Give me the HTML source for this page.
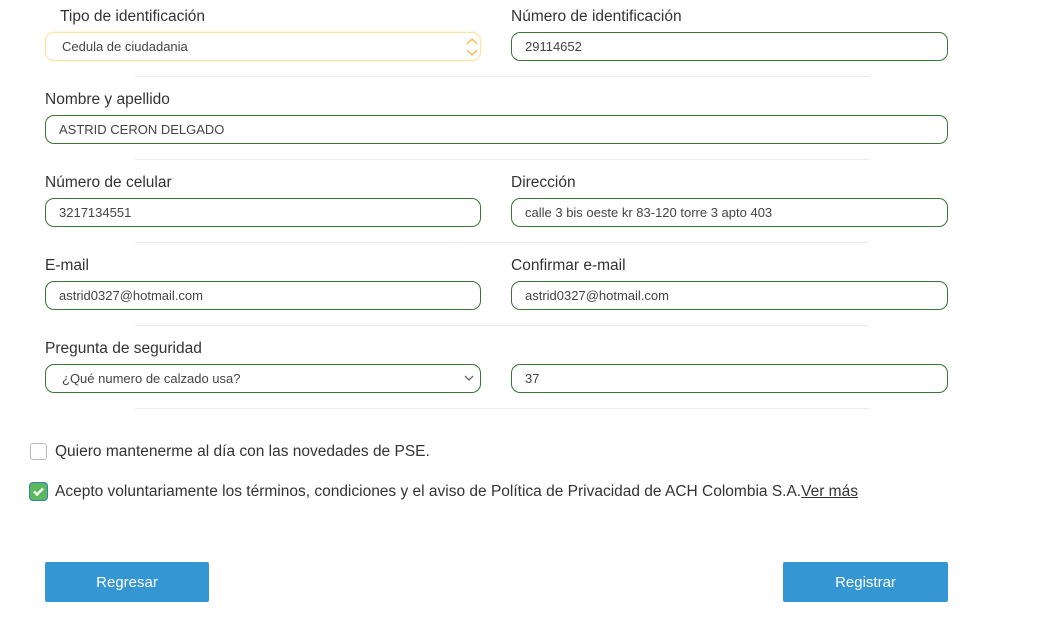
<!DOCTYPE html><html><head><meta charset="utf-8"><style>
body{margin:0;width:1049px;height:620px;background:#fff;font-family:"Liberation Sans",sans-serif;position:relative;overflow:hidden;color:#333}
.l{position:absolute;font-size:15.5px;color:#333}
.i{position:absolute;height:27px;border:1px solid #3a7535;border-radius:9px;font-size:13px;color:#444;line-height:27px;box-sizing:content-box}
.i span{padding-left:13px}
.d{position:absolute;left:135px;width:734px;height:1px;background:#ececec}
.c{position:absolute;font-size:15.5px;color:#333}
.b{position:absolute;top:562px;height:40px;background:#3497d3;color:#fff;font-size:15px;text-align:center;line-height:42px;border-radius:2px}
</style></head><body>
<div class="l" style="left:60px;top:8px">Tipo de identificación</div>
<div class="i" style="left:45px;top:32px;width:434px;border-color:#fbe3a8;box-shadow:0 0 2px #fde9b8"><span style="padding-left:16px">Cedula de ciudadania</span>
<svg style="position:absolute;right:2px;top:5px" width="12" height="18" viewBox="0 0 12 18"><path d="M1 6 L6 1 L11 6 M1 12 L6 17 L11 12" fill="none" stroke="#f2b84a" stroke-width="1.3"/></svg></div>
<div class="l" style="left:511px;top:8px">Número de identificación</div>
<div class="i" style="left:511px;top:32px;width:435px"><span>29114652</span></div>
<div class="d" style="top:76px"></div>
<div class="l" style="left:45px;top:91px">Nombre y apellido</div>
<div class="i" style="left:45px;top:115px;width:901px"><span>ASTRID CERON DELGADO</span></div>
<div class="d" style="top:159px"></div>
<div class="l" style="left:45px;top:174px">Número de celular</div>
<div class="i" style="left:45px;top:198px;width:434px"><span>3217134551</span></div>
<div class="l" style="left:511px;top:174px">Dirección</div>
<div class="i" style="left:511px;top:198px;width:435px"><span>calle 3 bis oeste kr 83-120 torre 3 apto 403</span></div>
<div class="d" style="top:242px"></div>
<div class="l" style="left:45px;top:257px">E-mail</div>
<div class="i" style="left:45px;top:281px;width:434px"><span>astrid0327@hotmail.com</span></div>
<div class="l" style="left:511px;top:257px">Confirmar e-mail</div>
<div class="i" style="left:511px;top:281px;width:435px"><span>astrid0327@hotmail.com</span></div>
<div class="d" style="top:325px"></div>
<div class="l" style="left:45px;top:340px">Pregunta de seguridad</div>
<div class="i" style="left:45px;top:364px;width:434px"><span style="padding-left:16px">¿Qué numero de calzado usa?</span>
<svg style="position:absolute;right:6px;top:10px" width="10" height="7" viewBox="0 0 10 7"><path d="M1 1 L5 5 L9 1" fill="none" stroke="#666" stroke-width="1.3"/></svg></div>
<div class="i" style="left:511px;top:364px;width:435px"><span>37</span></div>
<div class="d" style="top:408px"></div>
<div style="position:absolute;left:30px;top:443px;width:15px;height:15px;border:1px solid #bbb;border-radius:3px"></div>
<div class="c" style="left:55px;top:443px">Quiero mantenerme al día con las novedades de PSE.</div>
<div style="position:absolute;left:30px;top:483px;width:17px;height:17px;background:#5cb85c;border-radius:3px;box-shadow:0 0 0 1px #3a7fb8"><svg width="17" height="17" viewBox="0 0 17 17"><path d="M4 8.5 L7 11.5 L13 5.5" fill="none" stroke="#fff" stroke-width="2.4"/></svg></div>
<div class="c" style="left:55px;top:483px">Acepto voluntariamente los términos, condiciones y el aviso de Política de Privacidad de ACH Colombia S.A.<u>Ver más</u></div>
<div class="b" style="left:45px;width:164px">Regresar</div>
<div class="b" style="left:783px;width:165px">Registrar</div>
</body></html>
